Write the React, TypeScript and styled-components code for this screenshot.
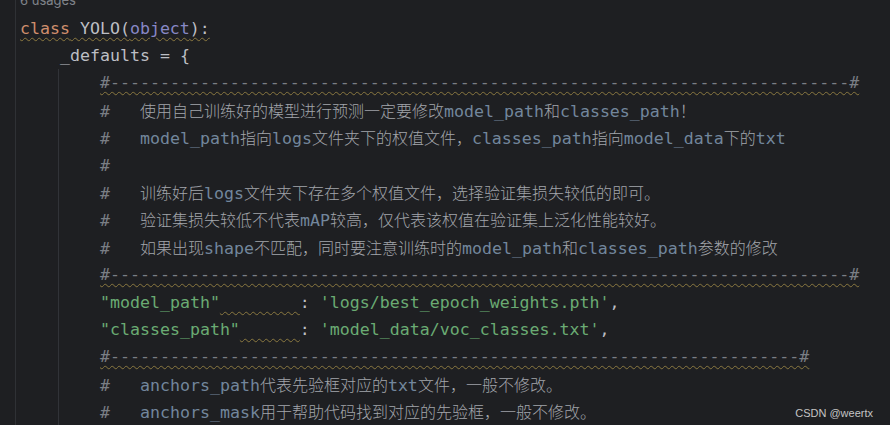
import React from "react";
import styled, { createGlobalStyle } from "styled-components";

const Global = createGlobalStyle`
  html, body { margin: 0; padding: 0; background: #1e1f22; overflow: hidden; }
`;

const Editor = styled.div`
  position: relative;
  width: 890px;
  height: 425px;
  display: flex;
  background: #1e1f22;
  overflow: hidden;
  font-family: "DejaVu Sans Mono", "Noto Sans CJK SC", monospace;
  font-size: 16.6px;
  color: #bcbec4;
`;

const Gutter = styled.div`
  flex: none;
  width: 15px;
  border-right: 1px solid #2f3135;
`;

const Code = styled.div`
  flex: 1;
  display: flex;
  flex-direction: column;
  padding-left: 4px;
  margin-top: -12.7px;
`;

const Line = styled.div<{ $indent?: number }>`
  height: 27.4px;
  line-height: 27.4px;
  white-space: pre;
  padding-left: ${(p) => (p.$indent ?? 0) * 10}px;
`;

const Hint = styled(Line)`
  font-family: Inter, "Noto Sans", sans-serif;
  font-size: 13px;
  color: #80848b;
`;

const Block = styled.div`
  display: flex;
  flex-direction: column;
  margin-left: 38px;
  padding-left: 41px;
  border-left: 1px solid #313338;
`;

const Kw = styled.span`color: #cf8e6d;`;
const Builtin = styled.span`color: #8888c6;`;
const Str = styled.span`color: #6aab73;`;
const Hash = styled.span`color: #7a7e85;`;
const CWord = styled.span`color: #72869c;`;
const Cjk = styled.span`
  font-family: "Noto Sans CJK SC", sans-serif;
  font-size: 16px;
  font-weight: 300;
  color: #a2a5ab;
`;
const Wavy = styled.span`
  text-decoration-line: underline;
  text-decoration-style: wavy;
  text-decoration-color: #8a7840;
  text-decoration-thickness: 1px;
  text-underline-offset: 3px;
`;

const Watermark = styled.div`
  position: absolute;
  right: 17px;
  bottom: 6px;
  font-family: "Liberation Sans", Arial, sans-serif;
  font-size: 11px;
  color: #c4c4c4;
`;

const CJK_RE = /([\u3000-\u303f\u4e00-\u9fff\uff00-\uffef]+)/;

function Mixed({ text }: { text: string }) {
  const parts = text.split(CJK_RE).filter((s) => s.length > 0);
  return (
    <>
      {parts.map((p, i) =>
        CJK_RE.test(p) ? <Cjk key={i}>{p}</Cjk> : <CWord key={i}>{p}</CWord>
      )}
    </>
  );
}

function Comment({ text }: { text?: string }) {
  return (
    <Line>
      <Hash>#</Hash>
      {text ? (
        <>
          {"   "}
          <Mixed text={text} />
        </>
      ) : null}
    </Line>
  );
}

function Separator({ dashes }: { dashes: number }) {
  return (
    <Line>
      <Wavy>
        <Hash>{"#" + "-".repeat(dashes) + "#"}</Hash>
      </Wavy>
    </Line>
  );
}

function Entry({ k, pad, v }: { k: string; pad: number; v: string }) {
  return (
    <Line>
      <Str>{`"${k}"`}</Str>
      <Wavy>{" ".repeat(pad)}</Wavy>
      {": "}
      <Str>{`'${v}'`}</Str>
      {","}
    </Line>
  );
}

export default function App() {
  return (
    <>
      <Global />
      <Editor>
        <Gutter />
        <Code>
          <Hint>6 usages</Hint>
          <Line>
            <Wavy>
              <Kw>class</Kw> YOLO(<Builtin>object</Builtin>):
            </Wavy>
          </Line>
          <Line $indent={4}>_defaults = {"{"}</Line>
          <Block>
            <Separator dashes={74} />
            <Comment text="使用自己训练好的模型进行预测一定要修改model_path和classes_path！" />
            <Comment text="model_path指向logs文件夹下的权值文件，classes_path指向model_data下的txt" />
            <Comment />
            <Comment text="训练好后logs文件夹下存在多个权值文件，选择验证集损失较低的即可。" />
            <Comment text="验证集损失较低不代表mAP较高，仅代表该权值在验证集上泛化性能较好。" />
            <Comment text="如果出现shape不匹配，同时要注意训练时的model_path和classes_path参数的修改" />
            <Separator dashes={74} />
            <Entry k="model_path" pad={8} v="logs/best_epoch_weights.pth" />
            <Entry k="classes_path" pad={6} v="model_data/voc_classes.txt" />
            <Separator dashes={69} />
            <Comment text="anchors_path代表先验框对应的txt文件，一般不修改。" />
            <Comment text="anchors_mask用于帮助代码找到对应的先验框，一般不修改。" />
          </Block>
        </Code>
        <Watermark>CSDN @weertx</Watermark>
      </Editor>
    </>
  );
}
